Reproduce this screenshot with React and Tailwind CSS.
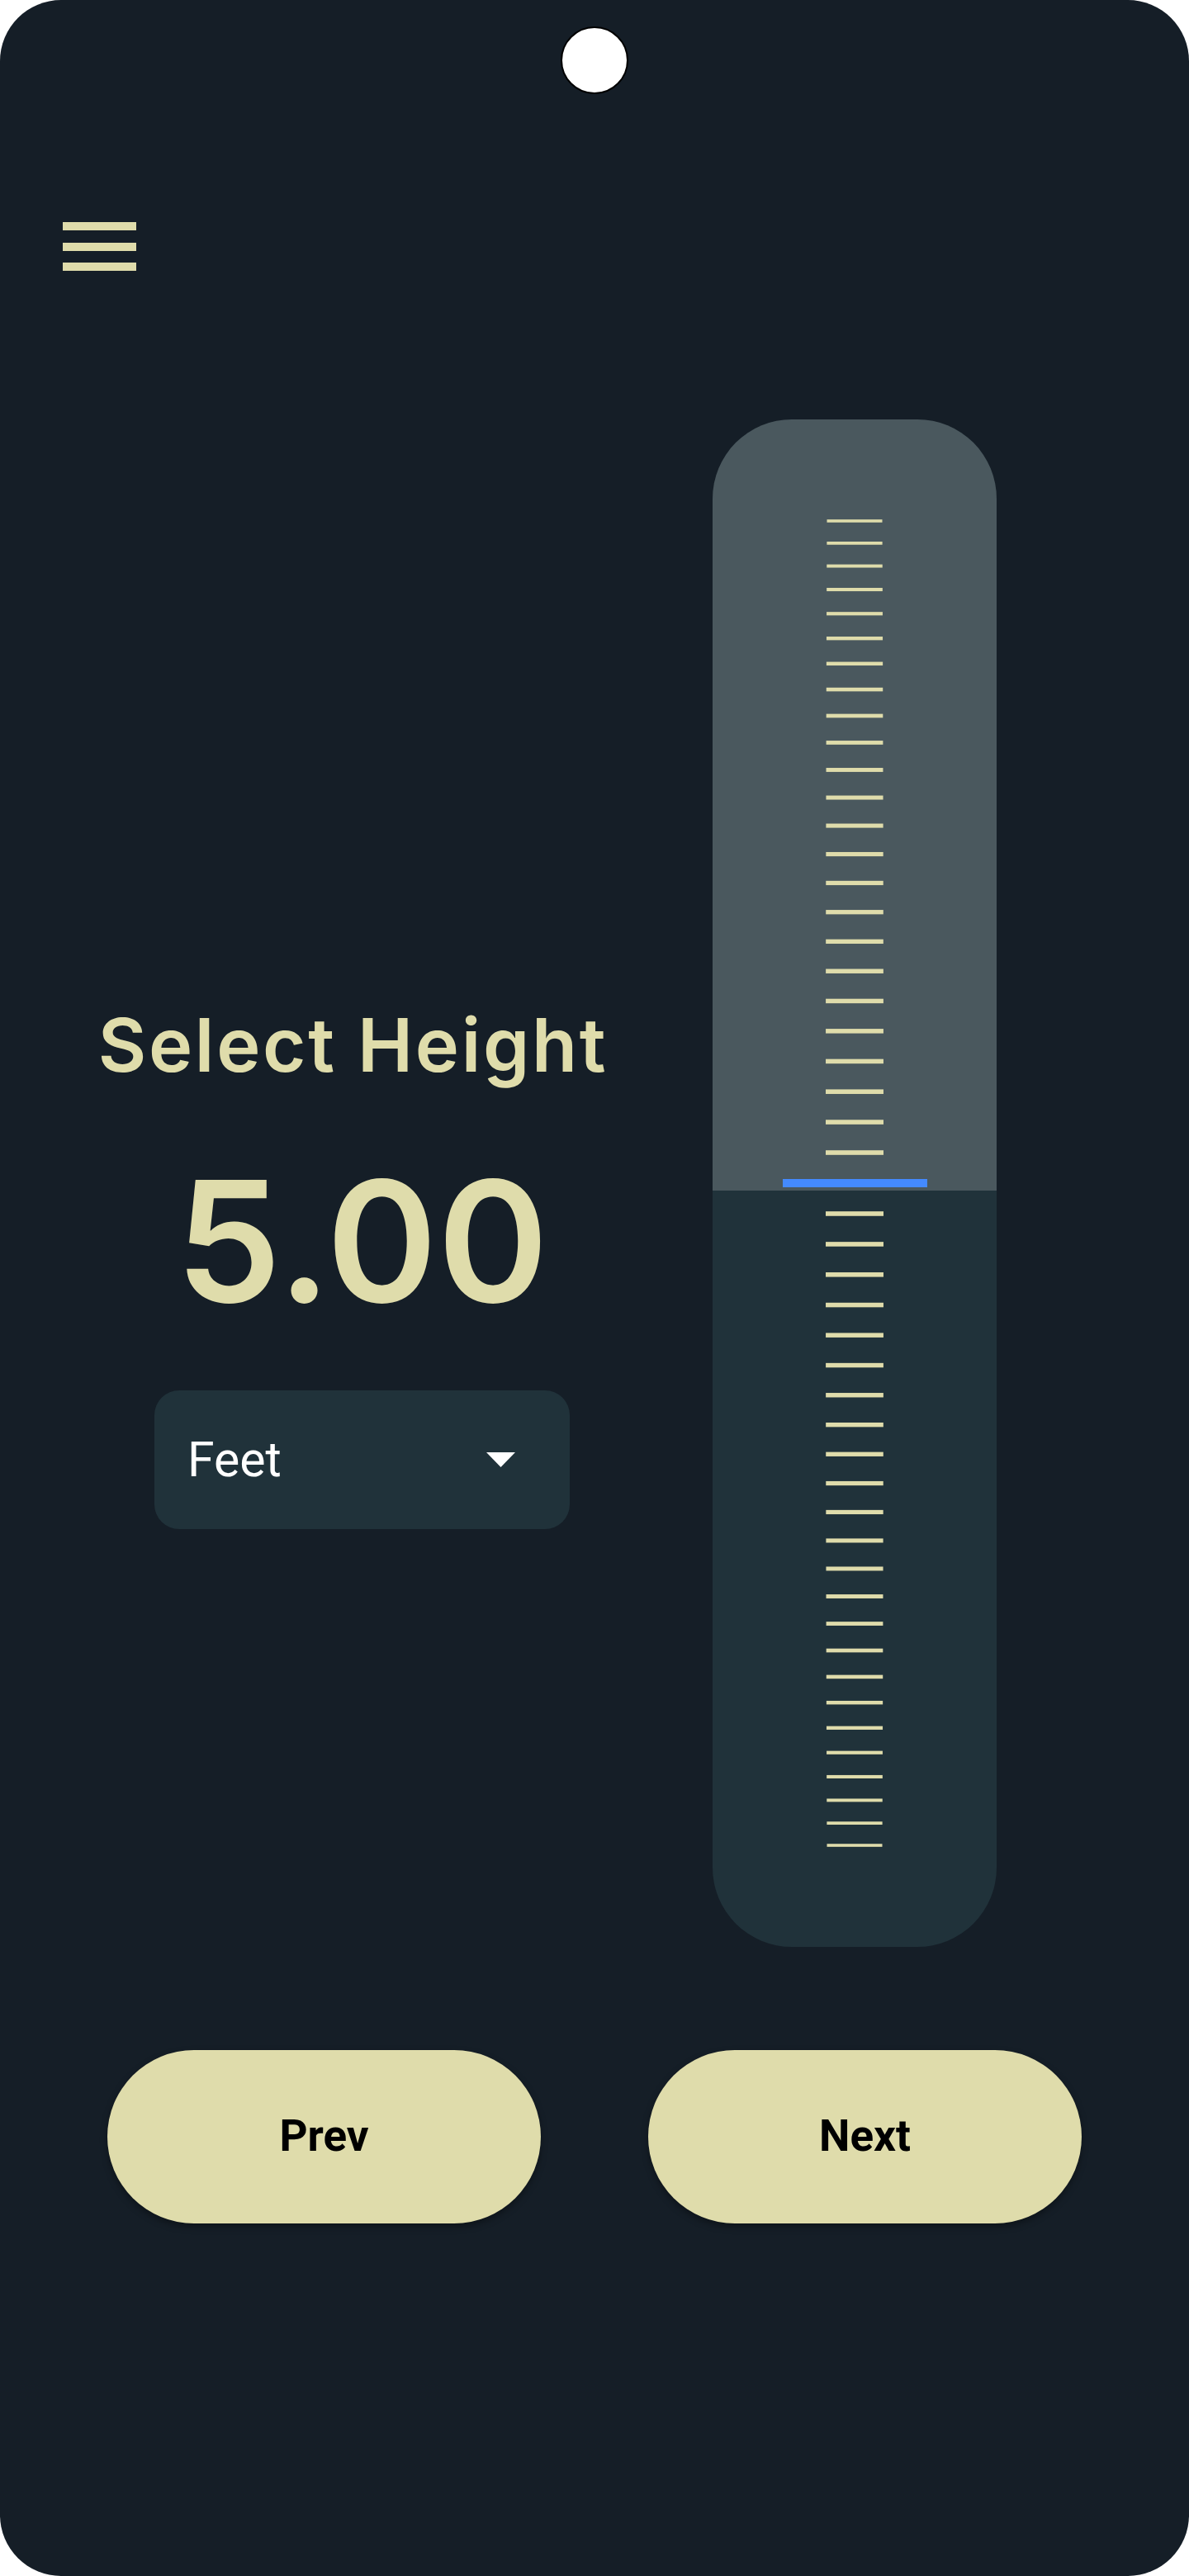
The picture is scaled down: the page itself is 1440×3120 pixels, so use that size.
import React from 'react';

const CREAM = '#dfdcab';

// drum-style ruler: ticks bunch together the further they are from the marker
const STEP = 0.0322;
const DRUM_R = 1148.8;
const MID_Y = 925;
const MID_X = 172;

const ticks = [];
for (let n = 1; n <= 24; n++) {
  const angle = n * STEP;
  const offset = DRUM_R * Math.sin(angle);
  const f = (Math.cos(angle) - 0.716) / (1 - 0.716);
  const h = 3.6 + 2 * f;
  const w = 67 + 3 * f;
  ticks.push({ id: `t${n}`, y: MID_Y - offset, h, w });
  ticks.push({ id: `b${n}`, y: MID_Y + offset, h, w });
}

const HeightRuler = () => (
  <div className="relative w-[344px] h-[1850px] rounded-[96px] overflow-hidden flex flex-col">
    <div className="h-[934px] bg-[#4a585e]" />
    <div className="flex-1 bg-[#20323a]" />
    <svg className="absolute inset-0" width="344" height="1850" viewBox="0 0 344 1850">
      {ticks.map((t) => (
        <rect key={t.id} x={MID_X - t.w / 2} y={t.y - t.h / 2} width={t.w} height={t.h} fill={CREAM} />
      ))}
      <rect x="85" y="920" width="175" height="10" fill="#448aff" />
    </svg>
  </div>
);

const PillButton = ({ label }) => (
  <button className="w-[525px] h-[210px] rounded-full bg-[#dfdcab] shadow-[0_4px_8px_rgba(0,0,0,0.35)] flex items-center justify-center text-black text-[53px] font-bold font-['Roboto',sans-serif]">
    {label}
  </button>
);

export default function App() {
  return (
    <div className="w-[1440px] h-[3120px] bg-white">
      <div className="relative w-full h-full rounded-[74px] bg-[#151e27] flex flex-col">
        {/* punch-hole camera */}
        <div className="absolute top-[32px] left-[679px] w-[82px] h-[82px] rounded-full bg-white border-2 border-black" />

        {/* menu */}
        <div className="ml-[76px] mt-[269px] w-[89px] flex flex-col gap-[14.5px]">
          <span className="h-[10px] bg-[#dfdcab]" />
          <span className="h-[10px] bg-[#dfdcab]" />
          <span className="h-[10px] bg-[#dfdcab]" />
        </div>

        <div className="mt-[180px] flex">
          <div className="w-[863px] pl-[14px] pt-[713px] flex flex-col items-center text-[#dfdcab] font-['Inter',sans-serif]">
            <h1 className="mr-[22px] text-[90px] leading-none font-semibold tracking-[2.7px]">Select Height</h1>
            <div className="mt-[90px] text-[204px] leading-none font-semibold">5.00</div>
            <div className="mt-[79px] w-[503px] h-[168px] rounded-[30px] bg-[#20323a] flex items-center justify-between pl-[40px] pr-[66px]">
              <span className="text-white text-[59px] font-['Roboto',sans-serif]">Feet</span>
              <svg width="35" height="18" viewBox="0 0 35 18">
                <polygon points="0,0 35,0 17.5,18" fill="#ffffff" />
              </svg>
            </div>
          </div>
          <HeightRuler />
        </div>

        <div className="mt-[125px] flex gap-[130px] px-[130px]">
          <PillButton label="Prev" />
          <PillButton label="Next" />
        </div>
      </div>
    </div>
  );
}
